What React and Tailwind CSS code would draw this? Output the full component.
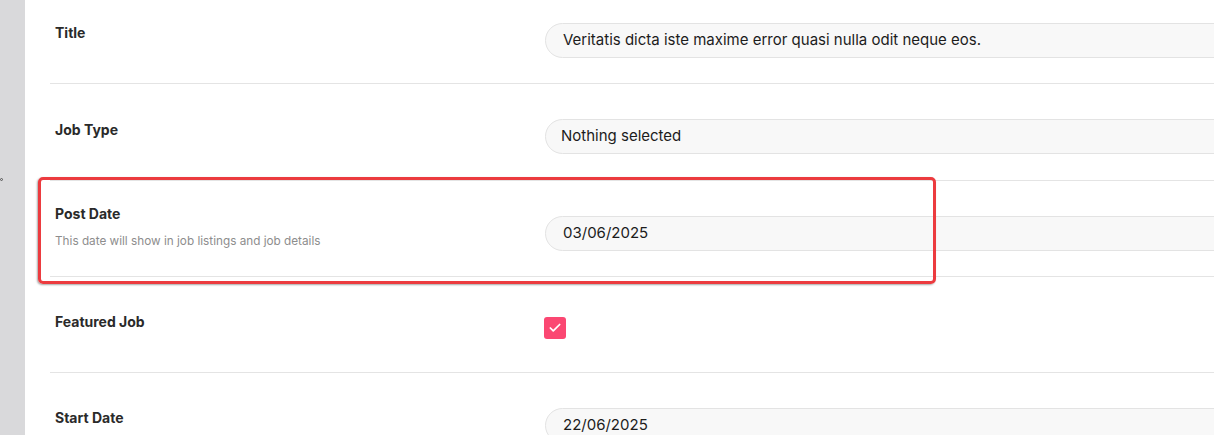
import React from "react";
import { Check } from "lucide-react";

const fieldFont = { fontFamily: "Inter, 'Noto Sans', sans-serif" };

const rows = [
  { label: "Title", value: "Veritatis dicta iste maxime error quasi nulla odit neque eos.", type: "text", h: "h-[96px]" },
  { label: "Job Type", value: "Nothing selected", type: "select", h: "h-[97px]" },
  {
    label: "Post Date",
    hint: "This date will show in job listings and job details",
    value: "03/06/2025",
    type: "text",
    h: "h-[96px]",
  },
  { label: "Featured Job", type: "checkbox", h: "h-[96px]" },
  { label: "Start Date", value: "22/06/2025", type: "text", h: "h-[96px]" },
];

const FieldRow = ({ row }) => (
  <div className={`flex border-b border-[#e4e4e4] ${row.h}`}>
    <div className="w-[495px] shrink-0 pl-[5px] pb-[5px] flex flex-col justify-center">
      <p className="text-[14px] leading-5 font-bold text-[#2a2a2a]">{row.label}</p>
      {row.hint && (
        <p className="mt-[9px] text-[11.75px] leading-4 text-[#8d8d8d]">{row.hint}</p>
      )}
    </div>
    <div className="flex-1 pt-[35px]">
      {row.type === "checkbox" ? (
        <div className="h-[34px] flex items-center -mt-[1px]">
          <span className="w-[22px] h-[22px] -ml-[1px] rounded-[3px] bg-[#fb4772] flex items-center justify-center">
            <Check className="w-[14px] h-[14px] text-white" strokeWidth={3} />
          </span>
        </div>
      ) : (
        <div
          className={`w-[760px] h-[35px] rounded-full border border-[#e3e3e3] bg-[#f8f8f8] flex items-center text-[15px] text-[#1c1c1c] ${
            row.type === "select" ? "pl-[15px]" : "pl-[17px]"
          }`}
        >
          {row.value}
        </div>
      )}
    </div>
  </div>
);

export default function App() {
  return (
    <div className="relative w-full h-[435px] overflow-hidden bg-white flex" style={fieldFont}>
      <div className="w-[25px] shrink-0 bg-[#d9d9db] relative">
        <span className="absolute left-0 top-[178px] w-[3px] h-[3px] rounded-full border border-[#555]" />
      </div>
      <div className="flex-1 pl-[25px] -mt-[12px]">
        {rows.map((row) => (
          <FieldRow key={row.label} row={row} />
        ))}
      </div>
      <div className="absolute left-[38px] top-[177px] w-[898px] h-[107px] border-[3px] border-[#ec3b3f] rounded-[5px] shadow-[-1px_1px_2px_rgba(0,0,0,0.35)] pointer-events-none" />
    </div>
  );
}
